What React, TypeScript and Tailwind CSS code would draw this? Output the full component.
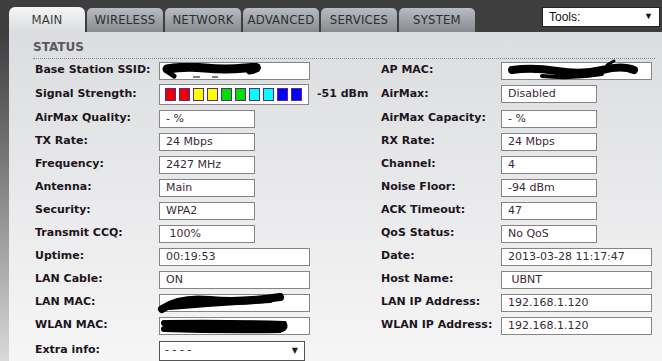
const tabs = ["MAIN", "WIRELESS", "NETWORK", "ADVANCED", "SERVICES", "SYSTEM"];

type Cell = { label: string; value?: string; wide?: boolean; kind?: "ssid" | "apmac" | "lanmac" | "wlanmac" | "signal" | "select" };

const rows: { left: Cell; right?: Cell; h: string }[] = [
  { left: { label: "Base Station SSID:", kind: "ssid", wide: true }, right: { label: "AP MAC:", kind: "apmac", wide: true }, h: "h-[23px]" },
  { left: { label: "Signal Strength:", kind: "signal" }, right: { label: "AirMax:", value: "Disabled" }, h: "h-[24px]" },
  { left: { label: "AirMax Quality:", value: "- %" }, right: { label: "AirMax Capacity:", value: "- %" }, h: "h-[24px] pt-[1px]" },
  { left: { label: "TX Rate:", value: "24 Mbps" }, right: { label: "RX Rate:", value: "24 Mbps" }, h: "h-[23px]" },
  { left: { label: "Frequency:", value: "2427 MHz" }, right: { label: "Channel:", value: "4" }, h: "h-[23px]" },
  { left: { label: "Antenna:", value: "Main" }, right: { label: "Noise Floor:", value: "-94 dBm" }, h: "h-[23px]" },
  { left: { label: "Security:", value: "WPA2" }, right: { label: "ACK Timeout:", value: "47" }, h: "h-[23px]" },
  { left: { label: "Transmit CCQ:", value: "\u00a0100%" }, right: { label: "QoS Status:", value: "No QoS" }, h: "h-[23px]" },
  { left: { label: "Uptime:", value: "00:19:53", wide: true }, right: { label: "Date:", value: "2013-03-28 11:17:47", wide: true }, h: "h-[23px]" },
  { left: { label: "LAN Cable:", value: "ON", wide: true }, right: { label: "Host Name:", value: "\u00a0UBNT", wide: true }, h: "h-[23px]" },
  { left: { label: "LAN MAC:", kind: "lanmac", wide: true }, right: { label: "LAN IP Address:", value: "192.168.1.120", wide: true }, h: "h-[23px]" },
  { left: { label: "WLAN MAC:", kind: "wlanmac", wide: true }, right: { label: "WLAN IP Address:", value: "192.168.1.120", wide: true }, h: "h-[23px]" },
  { left: { label: "Extra info:", kind: "select" }, h: "h-[25px] pt-[2px]" },
];

const bars = ["#ee0000", "#ee0000", "#ffff00", "#ffff00", "#00e000", "#00e000", "#00ffff", "#00ffff", "#0000ff", "#0000ff"];

function Blob({ kind }: { kind: string }) {
  if (kind === "ssid")
    return (
      <svg className="absolute left-0 top-0" width="151" height="17" viewBox="0 0 151 17">
        <path d="M7 6 Q25 3 45 5 T85 5 T90 7" stroke="#000" strokeWidth="9" fill="none" strokeLinecap="round" />
        <path d="M8 9 L14 13" stroke="#000" strokeWidth="5" strokeLinecap="round" />
        <path d="M33 14 L40 14 M52 14 L58 14" stroke="#000" strokeWidth="1" />
      </svg>
    );
  if (kind === "apmac")
    return (
      <svg className="absolute left-0 top-0" width="151" height="17" viewBox="0 0 151 17" overflow="visible">
        <path d="M10 7 Q30 4 55 8 T100 7 T132 7" stroke="#000" strokeWidth="8" fill="none" strokeLinecap="round" />
        <path d="M40 13 Q70 16 100 11" stroke="#000" strokeWidth="4" fill="none" strokeLinecap="round" />
        <path d="M105 2 L112 -2" stroke="#000" strokeWidth="3" strokeLinecap="round" />
      </svg>
    );
  if (kind === "lanmac")
    return (
      <svg className="absolute left-0 top-0" width="151" height="17" viewBox="0 0 151 17" overflow="visible">
        <path d="M2 14 Q20 2 50 5 T120 2" stroke="#000" strokeWidth="8" fill="none" strokeLinecap="round" />
        <path d="M10 12 Q60 8 110 5" stroke="#000" strokeWidth="6" fill="none" strokeLinecap="round" />
      </svg>
    );
  return (
    <svg className="absolute left-0 top-0" width="151" height="17" viewBox="0 0 151 17">
      <path d="M4 5 Q60 4 124 6 Q126 10 120 12 Q60 13 4 11" stroke="#000" strokeWidth="6" fill="#000" strokeLinecap="round" />
    </svg>
  );
}

function Value({ cell }: { cell: Cell }) {
  if (cell.kind === "signal")
    return (
      <div className="flex items-center">
        <div className="flex h-[21px] w-[150px] items-center gap-[3px] border border-[#858585] bg-white pl-[5px]">
          {bars.map((c, i) => (
            <div key={i} className="h-[13px] w-[11px] border border-[#5a2a8a]" style={{ background: c }} />
          ))}
        </div>
        <span className="ml-[8px] text-[11px] font-bold text-[#231a23]">-51 dBm</span>
      </div>
    );
  if (cell.kind === "select")
    return (
      <div className="flex h-[20px] w-[146px] items-center justify-between border border-[#555] bg-white pl-[5px] pr-[6px] text-[11px] text-[#231a23]">
        <span>- - - -</span>
        <span className="text-[8px]">▼</span>
      </div>
    );
  return (
    <div
      className={`relative h-[18px] ${cell.wide ? "w-[151px]" : "w-[96px]"} border border-[#858585] bg-white pl-[6px] text-[11px] leading-[16px] text-[#3a2a3a] whitespace-pre`}
    >
      {cell.value}
      {cell.kind && <Blob kind={cell.kind} />}
    </div>
  );
}

export default function App() {
  return (
    <div className="flex h-[361px] w-[662px] flex-col overflow-hidden bg-[#3e3e3e] font-['DejaVu_Sans',Verdana,sans-serif]">
      <div className="flex h-[32px] shrink-0 items-end pl-[9px]">
        {tabs.map((t, i) => (
          <div
            key={t}
            className={
              i === 0
                ? "mr-[2px] flex h-[25px] w-[76px] items-center justify-center rounded-t-[6px] bg-gradient-to-b from-[#f4f5f6] to-[#dcdde0] text-[13px] text-[#3a3a3a]"
                : "mr-[2px] flex h-[24px] w-[76px] items-center justify-center rounded-t-[5px] bg-gradient-to-b from-[#b9bcc0] to-[#878a8f] text-[13px] text-[#2e2e2e]"
            }
          >
            <span className="font-['DejaVu_Sans_Condensed','Liberation_Sans_Narrow',sans-serif] tracking-[0.2px]">{t}</span>
          </div>
        ))}
        <div className="ml-auto mb-[5px] mr-[2px] flex h-[20px] w-[118px] items-center justify-between border border-[#222] bg-white pl-[6px] pr-[6px] font-['Liberation_Sans',Arial,sans-serif] text-[12px] text-[#111]">
          <span>Tools:</span>
          <span className="text-[9px]">▼</span>
        </div>
      </div>
      <div className="flex flex-1">
        <div className="w-[9px] bg-gradient-to-b from-[#3e3e3e] via-[#8a8a8a] to-[#dadada]" />
        <div className="flex-1 bg-gradient-to-b from-[#dcdde0] to-[#f6f6f6] pl-[24px] pr-[7px]">
          <div className="border-b border-dotted border-[#8a8a8a] pt-[8px] pb-[3px] text-[12px] font-bold leading-[15px] text-[#5a5a5a]">STATUS</div>
          <div className="pl-[2px]">
            {rows.map((r, i) => (
              <div key={i} className={`flex items-center ${r.h}`}>
                <div className="flex w-[346px] items-center">
                  <div className="w-[124px] text-[11px] font-bold text-[#1e1420]">{r.left.label}</div>
                  <Value cell={r.left} />
                </div>
                {r.right && (
                  <div className="flex items-center">
                    <div className="w-[120px] text-[11px] font-bold text-[#1e1420]">{r.right.label}</div>
                    <Value cell={r.right} />
                  </div>
                )}
              </div>
            ))}
          </div>
        </div>
      </div>
    </div>
  );
}
